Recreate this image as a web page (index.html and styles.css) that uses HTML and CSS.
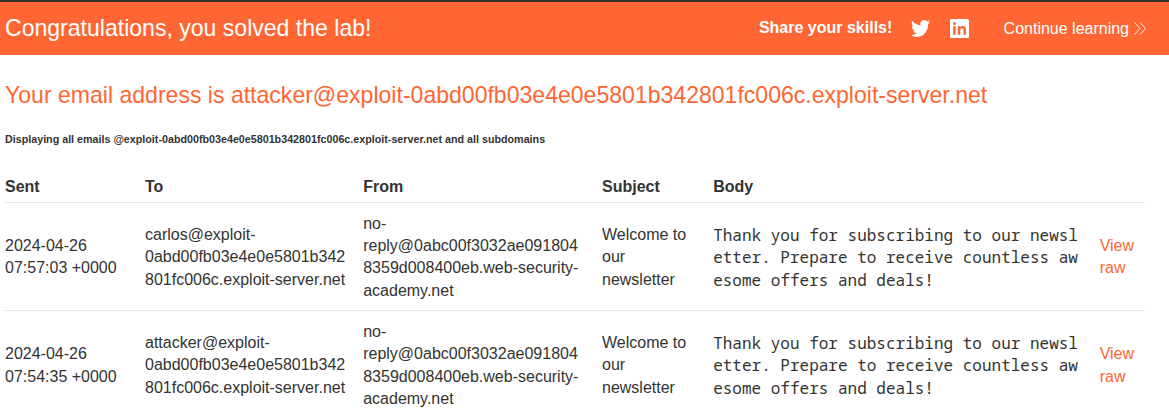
FILE: index.html
```html
<!DOCTYPE html>
<html lang="en">
<head>
<meta charset="utf-8">
<title>Exploit Server: Email client</title>
<link rel="stylesheet" href="styles.css">
</head>
<body>
<header class="banner">
  <h4 class="banner-title">Congratulations, you solved the lab!</h4>
  <div class="share">
    <span class="share-label">Share your skills!</span>
    <a class="icon-link twitter"><svg width="19" height="17" viewBox="0 2.200 24 19.600" preserveAspectRatio="none"><path d="M23.953 4.57a10 10 0 0 1-2.825.775 4.958 4.958 0 0 0 2.163-2.723c-.951.555-2.005.959-3.127 1.184a4.92 4.92 0 0 0-8.384 4.482C7.69 8.095 4.067 6.13 1.64 3.162a4.822 4.822 0 0 0-.666 2.475c0 1.71.87 3.213 2.188 4.096a4.904 4.904 0 0 1-2.228-.616v.06a4.923 4.923 0 0 0 3.946 4.827 4.996 4.996 0 0 1-2.212.085 4.936 4.936 0 0 0 4.604 3.417 9.867 9.867 0 0 1-6.102 2.105c-.39 0-.779-.023-1.17-.067a13.995 13.995 0 0 0 7.557 2.209c9.053 0 13.998-7.496 13.998-13.985 0-.21 0-.42-.015-.63A9.935 9.935 0 0 0 24 4.59z"/></svg></a>
    <a class="icon-link"><svg width="19" height="19" viewBox="0 0 24 24"><path fill-rule="evenodd" d="M1.900 0h20.200a1.900 1.900 0 0 1 1.900 1.900v20.200a1.900 1.900 0 0 1-1.900 1.900H1.900a1.900 1.900 0 0 1-1.900-1.900V1.900a1.900 1.900 0 0 1 1.900-1.900zM4 9v10.900h3.200V9zM5.600 3.900a1.900 1.900 0 1 0 0 3.800a1.900 1.900 0 1 0 0-3.800zM9.800 9v10.900h3.200v-5.400c0-1.500.4-2.800 2.100-2.800s1.900 1.500 1.900 2.900v5.300h3.200v-6c0-3-.7-5.100-4-5.100-1.600 0-2.700.9-3.200 1.700V9z"/></svg></a>
    <a class="continue">Continue learning <svg width="12" height="13" viewBox="0 0 12 13"><path d="M.5.5l5.500 6-5.500 6M6 .5l5.500 6-5.500 6"/></svg></a>
  </div>
</header>
<main class="content">
  <h4 class="address">Your email address is attacker@exploit-0abd00fb03e4e0e5801b342801fc006c.exploit-server.net</h4>
  <h6 class="note">Displaying all emails @exploit-0abd00fb03e4e0e5801b342801fc006c.exploit-server.net and all subdomains</h6>
  <table class="emails">
    <colgroup><col class="c-sent"><col class="c-to"><col class="c-from"><col class="c-subject"><col class="c-body"><col></colgroup>
    <thead>
      <tr><th>Sent</th><th>To</th><th>From</th><th>Subject</th><th>Body</th><th></th></tr>
    </thead>
    <tbody>
      <tr>
        <td>2024-04-26 07:57:03 +0000</td>
        <td>carlos@exploit-<br>0abd00fb03e4e0e5801b342<br>801fc006c.exploit-server.net</td>
        <td>no-<br>reply@0abc00f3032ae091804<br>8359d008400eb.web-security-<br>academy.net</td>
        <td>Welcome to our newsletter</td>
        <td><pre>Thank you for subscribing to our newsletter. Prepare to receive countless awesome offers and deals!</pre></td>
        <td><a class="raw">View raw</a></td>
      </tr>
      <tr>
        <td>2024-04-26 07:54:35 +0000</td>
        <td>attacker@exploit-<br>0abd00fb03e4e0e5801b342<br>801fc006c.exploit-server.net</td>
        <td>no-<br>reply@0abc00f3032ae091804<br>8359d008400eb.web-security-<br>academy.net</td>
        <td>Welcome to our newsletter</td>
        <td><pre>Thank you for subscribing to our newsletter. Prepare to receive countless awesome offers and deals!</pre></td>
        <td><a class="raw">View raw</a></td>
      </tr>
    </tbody>
  </table>
</main>
</body>
</html>
```
FILE: styles.css
```css
* { box-sizing: border-box; }
body {
  margin: 0;
  height: 415px;
  overflow: hidden;
  background: #fff;
  color: #333332;
  font: 16px/22.4px "Liberation Sans", Arial, sans-serif;
}
h4, h6, pre { margin: 0; }
.banner {
  display: flex;
  justify-content: space-between;
  align-items: center;
  height: 55px;
  padding: 0 23.2px 0 5px;
  border-top: 2px solid #333332;
  background: #ff6633;
  color: #fff;
}
.banner-title, .address {
  font-size: 23.05px;
  font-weight: 400;
  line-height: 32px;
}
.banner-title { padding-bottom: 2px; }
.share { display: flex; align-items: center; }
.share-label { font-weight: 700; margin-right: 18.5px; }
.icon-link { display: flex; margin-right: 34.8px; }
.twitter { margin-right: 20px; padding-bottom: 1px; }
.icon-link svg { fill: #fff; }
.continue { display: flex; align-items: center; gap: 4.8px; padding-top: 2px; }
.continue svg { fill: none; stroke: #fff; stroke-width: 0.9; margin-bottom: 2px; }
.content { padding: 24px 24px 0 5px; }
.address { color: #ff6633; white-space: nowrap; }
.note {
  margin-top: 21px;
  font-size: 10.73px;
  line-height: 15px;
}
.emails {
  width: 1140px;
  margin-top: 23px;
  table-layout: fixed;
  border-collapse: separate;
  border-spacing: 0;
}
.c-sent { width: 140px; }
.c-to { width: 218.2px; }
.c-from { width: 238.8px; }
.c-subject { width: 111.2px; }
.c-body { width: 386.5px; }
th, td {
  padding: 9.6px 15px 7.95px 0;
  border-bottom: 1px solid #e5e5e5;
  text-align: left;
  vertical-align: middle;
}
th { height: 33px; padding: 6px 0 3px; }
td { height: 108.15px; }
td:first-child { padding-right: 10px; }
td:last-child { padding-right: 0; }
pre {
  font: 16px/22.4px "Noto Sans Mono", "DejaVu Sans Mono", monospace;
  white-space: pre-wrap;
  word-break: break-all;
}
.raw { color: #ff6633; }
```
